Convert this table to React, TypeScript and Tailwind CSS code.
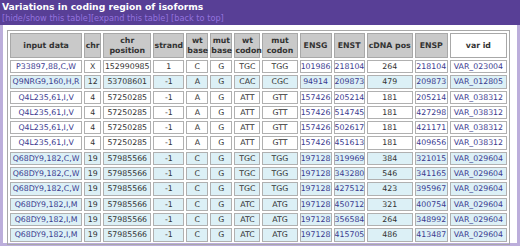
type Row = {
  input: string;
  chr: string;
  pos: string;
  strand: string;
  wt: string;
  mut: string;
  wtCodon: string;
  mutCodon: string;
  ensg: string;
  enst: string;
  cdna: string;
  ensp: string;
  varId: string;
  blue?: boolean;
};

const rows: Row[] = [
  { input: "P33897,88,C,W", chr: "X", pos: "152990985", strand: "1", wt: "C", mut: "G", wtCodon: "TGC", mutCodon: "TGG", ensg: "101986", enst: "218104", cdna: "264", ensp: "218104", varId: "VAR_023004" },
  { input: "Q9NRG9,160,H,R", chr: "12", pos: "53708601", strand: "-1", wt: "A", mut: "G", wtCodon: "CAC", mutCodon: "CGC", ensg: "94914", enst: "209873", cdna: "479", ensp: "209873", varId: "VAR_012805", blue: true },
  { input: "Q4L235,61,I,V", chr: "4", pos: "57250285", strand: "-1", wt: "A", mut: "G", wtCodon: "ATT", mutCodon: "GTT", ensg: "157426", enst: "205214", cdna: "181", ensp: "205214", varId: "VAR_038312" },
  { input: "Q4L235,61,I,V", chr: "4", pos: "57250285", strand: "-1", wt: "A", mut: "G", wtCodon: "ATT", mutCodon: "GTT", ensg: "157426", enst: "514745", cdna: "181", ensp: "427298", varId: "VAR_038312" },
  { input: "Q4L235,61,I,V", chr: "4", pos: "57250285", strand: "-1", wt: "A", mut: "G", wtCodon: "ATT", mutCodon: "GTT", ensg: "157426", enst: "502617", cdna: "181", ensp: "421171", varId: "VAR_038312" },
  { input: "Q4L235,61,I,V", chr: "4", pos: "57250285", strand: "-1", wt: "A", mut: "G", wtCodon: "ATT", mutCodon: "GTT", ensg: "157426", enst: "451613", cdna: "181", ensp: "409656", varId: "VAR_038312" },
  { input: "Q68DY9,182,C,W", chr: "19", pos: "57985566", strand: "-1", wt: "C", mut: "G", wtCodon: "TGC", mutCodon: "TGG", ensg: "197128", enst: "319969", cdna: "384", ensp: "321015", varId: "VAR_029604", blue: true },
  { input: "Q68DY9,182,C,W", chr: "19", pos: "57985566", strand: "-1", wt: "C", mut: "G", wtCodon: "TGC", mutCodon: "TGG", ensg: "197128", enst: "343280", cdna: "546", ensp: "341165", varId: "VAR_029604", blue: true },
  { input: "Q68DY9,182,C,W", chr: "19", pos: "57985566", strand: "-1", wt: "C", mut: "G", wtCodon: "TGC", mutCodon: "TGG", ensg: "197128", enst: "427512", cdna: "423", ensp: "395967", varId: "VAR_029604", blue: true },
  { input: "Q68DY9,182,I,M", chr: "19", pos: "57985566", strand: "-1", wt: "C", mut: "G", wtCodon: "ATC", mutCodon: "ATG", ensg: "197128", enst: "450712", cdna: "321", ensp: "400754", varId: "VAR_029604", blue: true },
  { input: "Q68DY9,182,I,M", chr: "19", pos: "57985566", strand: "-1", wt: "C", mut: "G", wtCodon: "ATC", mutCodon: "ATG", ensg: "197128", enst: "356584", cdna: "264", ensp: "348992", varId: "VAR_029604", blue: true },
  { input: "Q68DY9,182,I,M", chr: "19", pos: "57985566", strand: "-1", wt: "C", mut: "G", wtCodon: "ATC", mutCodon: "ATG", ensg: "197128", enst: "415705", cdna: "486", ensp: "413487", varId: "VAR_029604", blue: true },
];

const th = "border border-[#a8a8a8] bg-[#c9c9c9] p-0 text-center align-middle font-bold leading-[10px] text-[#333]";
const td = "border border-[#b0b0b0] p-0 text-center align-middle leading-[11.3px] whitespace-nowrap";
const link = "text-[#3b3b8f]";

export default function App() {
  return (
    <div className="w-[520px] h-[250px] bg-white overflow-hidden font-['DejaVu_Sans',Verdana,sans-serif]">
      <div className="h-[25px] bg-[#583f96] pl-[2px] pt-[1px]">
        <div className="text-[9.2px] font-bold leading-[12px] text-white">Variations in coding region of isoforms</div>
        <div className="text-[8.2px] leading-[10px] text-[#9473de]">
          [hide/show this table][expand this table] [back to top]
        </div>
      </div>
      <div className="w-[520px] h-[221px] border-x-[3px] border-b-[3px] border-[#bcaedb] pl-[4px] pt-[5px]">
        <table className="table-fixed w-[503px] border-separate border-spacing-[2px] border border-[#a8a8a8] text-[7.8px] text-[#333]">
          <colgroup>
            <col className="w-[72px]" />
            <col className="w-[17px]" />
            <col className="w-[48px]" />
            <col className="w-[31px]" />
            <col className="w-[22px]" />
            <col className="w-[22px]" />
            <col className="w-[26px]" />
            <col className="w-[35px]" />
            <col className="w-[32px]" />
            <col className="w-[31px]" />
            <col className="w-[46px]" />
            <col className="w-[33px]" />
            <col className="w-[57px]" />
          </colgroup>
          <thead>
            <tr className="h-[25px]">
              <th className={th}>input data</th>
              <th className={th}>chr</th>
              <th className={th}>chr<br />position</th>
              <th className={th}>strand</th>
              <th className={th}>wt<br />base</th>
              <th className={th}>mut<br />base</th>
              <th className={th}>wt<br />codon</th>
              <th className={th}>mut<br />codon</th>
              <th className={th}>ENSG</th>
              <th className={th}>ENST</th>
              <th className={th}>cDNA pos</th>
              <th className={th}>ENSP</th>
              <th className={`${th} bg-white`}>var id</th>
            </tr>
          </thead>
          <tbody>
            {rows.map((r, i) => (
              <tr key={i} className={r.blue ? "bg-[#dcf0f6]" : "bg-white"}>
                <td className={`${td} ${link}`}>{r.input}</td>
                <td className={td}>{r.chr}</td>
                <td className={td}>{r.pos}</td>
                <td className={td}>{r.strand}</td>
                <td className={td}>{r.wt}</td>
                <td className={td}>{r.mut}</td>
                <td className={td}>{r.wtCodon}</td>
                <td className={td}>{r.mutCodon}</td>
                <td className={`${td} ${link}`}>{r.ensg}</td>
                <td className={`${td} ${link}`}>{r.enst}</td>
                <td className={td}>{r.cdna}</td>
                <td className={`${td} ${link}`}>{r.ensp}</td>
                <td className={`${td} ${link}`}>{r.varId}</td>
              </tr>
            ))}
          </tbody>
        </table>
      </div>
    </div>
  );
}
